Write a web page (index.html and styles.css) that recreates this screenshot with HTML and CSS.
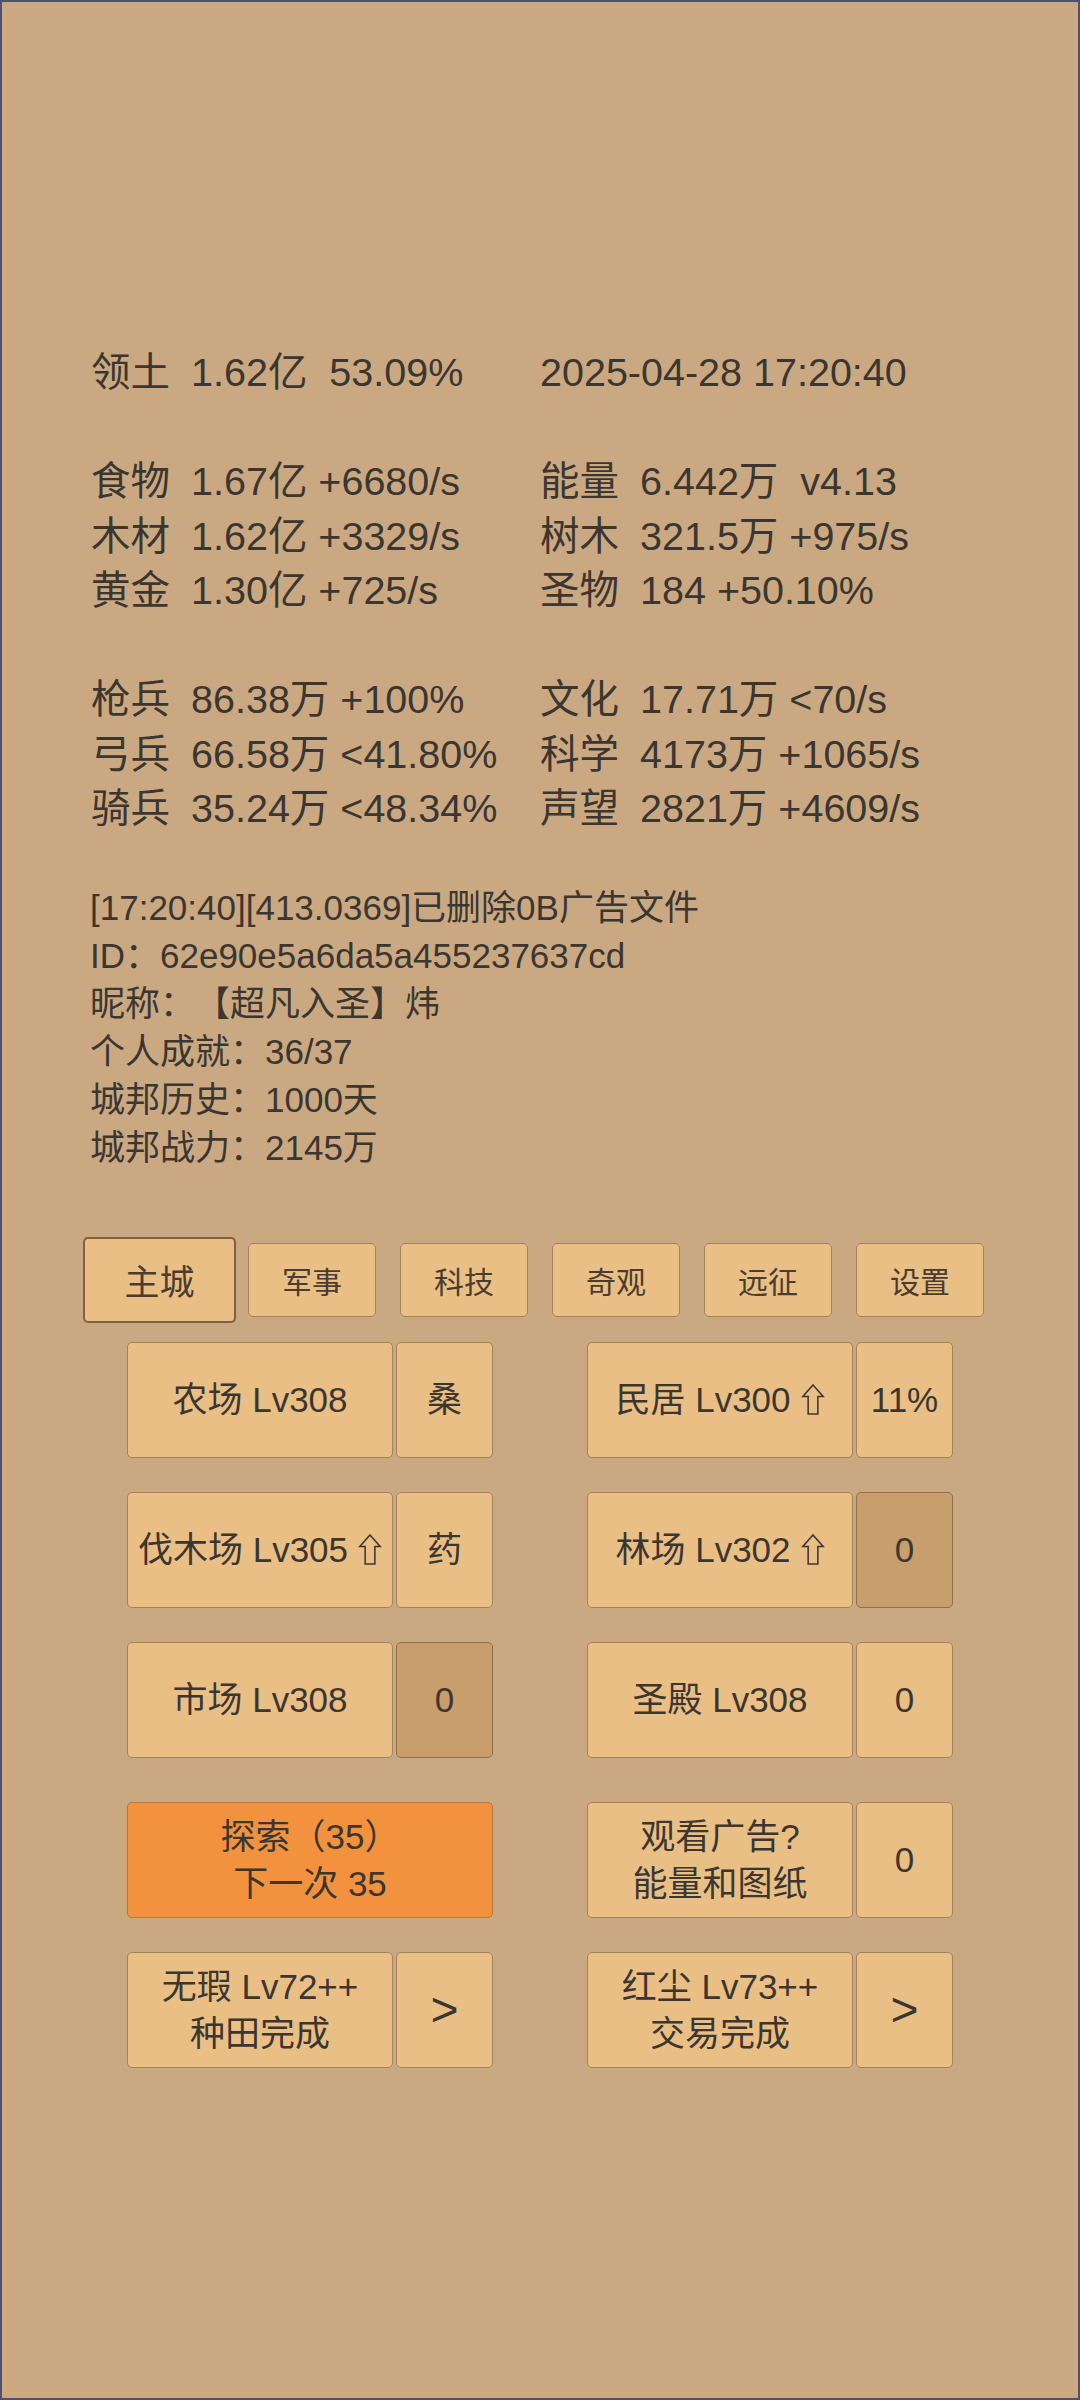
FILE: index.html
```html
<!DOCTYPE html>
<html lang="zh-CN">
<head>
  <meta charset="UTF-8">
  <meta name="viewport" content="width=device-width, initial-scale=1.0">
  <title>城邦</title>
  <link rel="stylesheet" href="styles.css">
</head>
<body>
  <div class="screen">
    <!-- Ресурсы -->
    <div class="stats">
      <div class="cell"><span class="k">领土</span><span class="v">1.62亿  53.09%</span></div>
      <div class="cell">2025-04-28 17:20:40</div>
      <div class="blank"></div>
      <div class="cell"><span class="k">食物</span><span class="v">1.67亿 +6680/s</span></div>
      <div class="cell"><span class="k">能量</span><span class="v">6.442万  v4.13</span></div>
      <div class="cell"><span class="k">木材</span><span class="v">1.62亿 +3329/s</span></div>
      <div class="cell"><span class="k">树木</span><span class="v">321.5万 +975/s</span></div>
      <div class="cell"><span class="k">黄金</span><span class="v">1.30亿 +725/s</span></div>
      <div class="cell"><span class="k">圣物</span><span class="v">184 +50.10%</span></div>
      <div class="blank"></div>
      <div class="cell"><span class="k">枪兵</span><span class="v">86.38万 +100%</span></div>
      <div class="cell"><span class="k">文化</span><span class="v">17.71万 &lt;70/s</span></div>
      <div class="cell"><span class="k">弓兵</span><span class="v">66.58万 &lt;41.80%</span></div>
      <div class="cell"><span class="k">科学</span><span class="v">4173万 +1065/s</span></div>
      <div class="cell"><span class="k">骑兵</span><span class="v">35.24万 &lt;48.34%</span></div>
      <div class="cell"><span class="k">声望</span><span class="v">2821万 +4609/s</span></div>
    </div>

    <!-- Лог и профиль -->
    <div class="log">
      <div class="line">[17:20:40][413.0369]已删除0B广告文件</div>
      <div class="line">ID：62e90e5a6da5a455237637cd</div>
      <div class="line">昵称：【超凡入圣】炜</div>
      <div class="line">个人成就：36/37</div>
      <div class="line">城邦历史：1000天</div>
      <div class="line">城邦战力：2145万</div>
    </div>

    <!-- Вкладки -->
    <div class="tabs">
      <button class="tab on">主城</button>
      <button class="tab">军事</button>
      <button class="tab">科技</button>
      <button class="tab">奇观</button>
      <button class="tab">远征</button>
      <button class="tab">设置</button>
    </div>

    <!-- Здания -->
    <div class="rows">
      <div class="row">
        <div class="pair">
          <button class="btn">农场 Lv308</button>
          <button class="btn s">桑</button>
        </div>
        <div class="pair">
          <button class="btn">民居 Lv300 <svg class="up" viewBox="0 0 24 34"><path d="M12 2 L22.5 14 H17 V32 H7 V14 H1.5 Z"/></svg></button>
          <button class="btn s">11%</button>
        </div>
      </div>
      <div class="row">
        <div class="pair">
          <button class="btn">伐木场 Lv305 <svg class="up" viewBox="0 0 24 34"><path d="M12 2 L22.5 14 H17 V32 H7 V14 H1.5 Z"/></svg></button>
          <button class="btn s">药</button>
        </div>
        <div class="pair">
          <button class="btn">林场 Lv302 <svg class="up" viewBox="0 0 24 34"><path d="M12 2 L22.5 14 H17 V32 H7 V14 H1.5 Z"/></svg></button>
          <button class="btn s dark">0</button>
        </div>
      </div>
      <div class="row">
        <div class="pair">
          <button class="btn">市场 Lv308</button>
          <button class="btn s dark">0</button>
        </div>
        <div class="pair">
          <button class="btn">圣殿 Lv308</button>
          <button class="btn s">0</button>
        </div>
      </div>
      <div class="row wide-gap">
        <div class="pair">
          <button class="btn explore">探索（35）<br>下一次 35</button>
        </div>
        <div class="pair">
          <button class="btn">观看广告?<br>能量和图纸</button>
          <button class="btn s">0</button>
        </div>
      </div>
      <div class="row">
        <div class="pair">
          <button class="btn">无瑕 Lv72++<br>种田完成</button>
          <button class="btn s arrow">&gt;</button>
        </div>
        <div class="pair">
          <button class="btn">红尘 Lv73++<br>交易完成</button>
          <button class="btn s arrow">&gt;</button>
        </div>
      </div>
    </div>
  </div>
</body>
</html>
```

FILE: styles.css
```css
* {
  box-sizing: border-box;
}

body {
  margin: 0;
  font-family: "Liberation Sans", "Noto Sans CJK SC", sans-serif;
  color: #3c3631;
  text-spacing-trim: space-all;
}

/* Экран целиком */
.screen {
  width: 1080px;
  height: 2400px;
  background: #caa982;
  border: 2px solid #4b5270;
  overflow: hidden;
}

/* Блок ресурсов */
.stats {
  display: grid;
  grid-template-columns: 449px auto;
  padding: 343px 0 0 89px;
  font-size: 39.5px;
  line-height: 54.5px;
}

.stats .cell {
  white-space: pre;
}

.stats .blank {
  grid-column: 1 / -1;
  height: 54.5px;
}

.stats .k {
  display: inline-block;
  width: 100px;
}

/* Лог */
.log {
  margin-top: 48px;
  padding-left: 88px;
  font-size: 35px;
  line-height: 48px;
}

.log .line {
  white-space: pre;
}

/* Вкладки */
.tabs {
  display: flex;
  align-items: center;
  gap: 24px;
  height: 86px;
  margin-top: 65px;
  padding-left: 81px;
}

.tab {
  width: 128px;
  height: 74px;
  padding: 0;
  font-family: inherit;
  font-size: 30px;
  color: #4a3d2f;
  background: #e9bf85;
  border: 1.5px solid #a3845a;
  border-radius: 5px;
}

.tab.on {
  width: 153px;
  height: 86px;
  margin-right: -12px;
  font-size: 35px;
  border: 2px solid #7f6040;
}

/* Кнопки зданий */
.rows {
  width: 826px;
  margin: 19px auto 0;
}

.row {
  display: flex;
  justify-content: space-between;
  margin-bottom: 34px;
}

.row.wide-gap {
  margin-top: 44px;
}

.pair {
  display: flex;
  gap: 3px;
}

.btn {
  display: flex;
  align-items: center;
  justify-content: center;
  width: 266px;
  height: 116px;
  padding: 0;
  font-family: inherit;
  font-size: 35px;
  line-height: 47px;
  color: #3c3631;
  text-align: center;
  white-space: nowrap;
  text-spacing-trim: space-all;
  background: #e9bf85;
  border: 1.5px solid #a3845a;
  border-radius: 5px;
}

.btn.s {
  width: 97px;
}

.btn.dark {
  background: #c89e6c;
  border-color: #8f7048;
}

.btn.explore {
  width: 366px;
  background: #f2923f;
  border-color: #b8763a;
}

.btn.arrow {
  font-size: 48px;
}

.up {
  width: 24px;
  height: 33px;
  margin-left: 10px;
  fill: none;
  stroke: #3c3631;
  stroke-width: 1.6;
}
```
